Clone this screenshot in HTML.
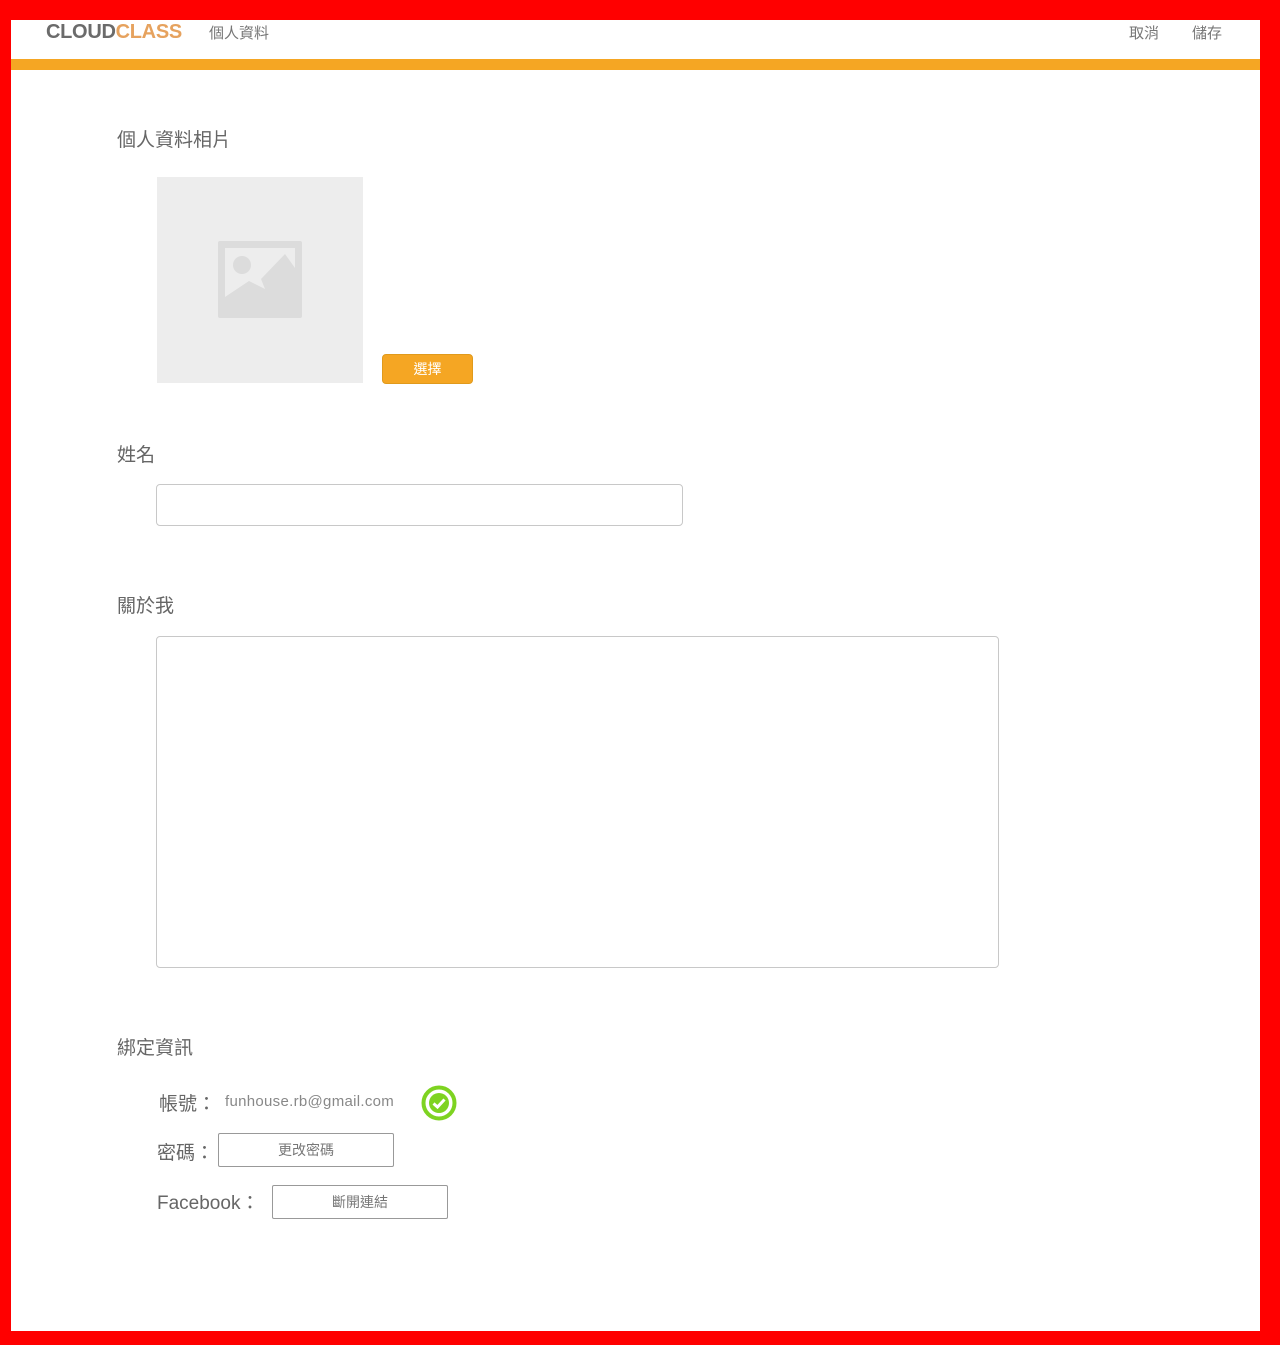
<!DOCTYPE html>
<html><head><meta charset="utf-8"><style>
*{margin:0;padding:0;box-sizing:border-box}
html,body{width:1280px;height:1345px;overflow:hidden;background:#f00}
body{font-family:"Liberation Sans","Noto Sans CJK TC",sans-serif;color:#666;position:relative}
.page{position:absolute;left:11px;top:20px;width:1249px;height:1311px;background:#fff}
.a{position:absolute;white-space:nowrap}
.bar{position:absolute;left:0;top:39px;width:1249px;height:11px;background:#f5a623}
.logo{left:35px;top:0;font-size:20px;font-weight:bold;line-height:24px;letter-spacing:-0.3px}
h3{position:absolute;font-weight:normal;font-size:19px;color:#666;left:106px}
.box{position:absolute;border:1px solid #c8c8c8;border-radius:4px}
.btn{position:absolute;border:1px solid #999;border-radius:2px;font-size:14px;text-align:center;color:#777}
</style></head><body><div class="page">
<div class="a logo"><span style="color:#6b6b6b">CLOUD</span><span style="color:#e6a25e">CLASS</span></div>
<div class="a" style="left:198px;top:2px;font-size:15px;color:#777">個人資料</div>
<div class="a" style="left:1118px;top:2px;font-size:15px;color:#777">取消</div>
<div class="a" style="left:1181px;top:2px;font-size:15px;color:#777">儲存</div>
<div class="bar"></div>

<h3 style="top:105px">個人資料相片</h3>
<div style="position:absolute;left:146px;top:157px;width:206px;height:206px;background:#ededed">
<svg width="206" height="206" style="position:absolute;left:0;top:0">
<rect x="61" y="64" width="84" height="77" rx="2" fill="#dcdcdc"/>
<rect x="68" y="71" width="70" height="50" fill="#ededed"/>
<circle cx="85" cy="88" r="9" fill="#dcdcdc"/>
<path d="M68 120 L92 104 L108 112 L104 102 L128 77 L138 91 L138 122 L68 122Z" fill="#dcdcdc"/>
</svg></div>
<div class="a" style="left:371px;top:334px;width:91px;height:30px;background:#f5a623;border:1px solid #e09a1c;border-radius:4px;color:#fff;font-size:14px;text-align:center;line-height:28px">選擇</div>

<h3 style="top:420px">姓名</h3>
<div class="box" style="left:145px;top:464px;width:527px;height:42px"></div>

<h3 style="top:571px">關於我</h3>
<div class="box" style="left:145px;top:616px;width:843px;height:332px"></div>

<h3 style="top:1013px">綁定資訊</h3>
<div class="a" style="left:148px;top:1069px;font-size:19px">帳號：</div>
<div class="a" style="left:214px;top:1073px;font-size:15px;color:#888;letter-spacing:0.3px">funhouse.rb@gmail.com</div>
<svg class="a" style="left:409px;top:1064px" width="38" height="38"><circle cx="19" cy="19" r="15.5" fill="none" stroke="#7ed321" stroke-width="4"/><circle cx="19" cy="19" r="10" fill="#7ed321"/><path d="M13.5 19.5 L17.5 23 L24.5 15.5" fill="none" stroke="#fff" stroke-width="3"/></svg>
<div class="a" style="left:146px;top:1118px;font-size:19px">密碼：</div>
<div class="btn" style="left:207px;top:1113px;width:176px;height:34px;line-height:32px">更改密碼</div>
<div class="a" style="left:146px;top:1168px;font-size:19px">Facebook：</div>
<div class="btn" style="left:261px;top:1165px;width:176px;height:34px;line-height:32px">斷開連結</div>
</div></body></html>
